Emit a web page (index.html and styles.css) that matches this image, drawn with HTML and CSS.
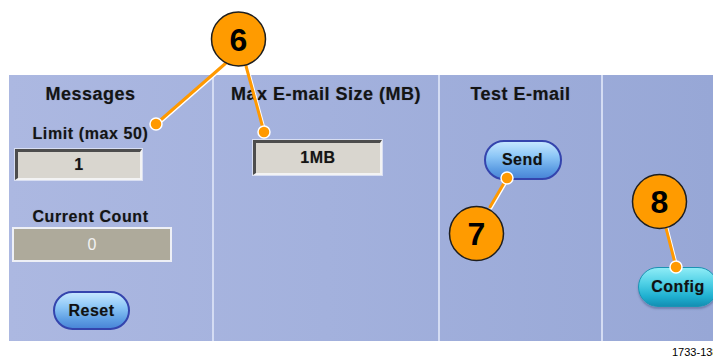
FILE: index.html
```html
<!DOCTYPE html>
<html>
<head>
<meta charset="utf-8">
<link rel="stylesheet" href="styles.css">
</head>
<body>
<div class="page">
  <div class="panel">
    <div class="col col-messages">
      <div class="head">Messages</div>
      <div class="label label-limit">Limit (max 50)</div>
      <div class="field field-limit">1</div>
      <div class="label label-count">Current Count</div>
      <div class="field-disabled">0</div>
      <button class="btn btn-blue btn-reset">Reset</button>
    </div>
    <div class="col col-size">
      <div class="head">Max E-mail Size (MB)</div>
      <div class="field field-size">1MB</div>
    </div>
    <div class="col col-test">
      <div class="head">Test E-mail</div>
      <button class="btn btn-blue btn-send">Send</button>
    </div>
    <div class="col col-config">
      <button class="btn btn-teal">Config</button>
    </div>
  </div>
  <div class="caption">1733-138</div>
</div>
<svg class="callouts" width="713" height="358" viewBox="0 0 713 358">
  <g stroke-linecap="round">
    <line x1="227" y1="64" x2="157" y2="125" stroke="#fff" stroke-width="3"/>
    <line x1="226" y1="63" x2="156" y2="124" stroke="#f90" stroke-width="3"/>
    <line x1="247" y1="66" x2="265" y2="132" stroke="#fff" stroke-width="3"/>
    <line x1="246" y1="66" x2="264" y2="132" stroke="#f90" stroke-width="3"/>
    <line x1="491" y1="208" x2="508" y2="179" stroke="#fff" stroke-width="3"/>
    <line x1="490" y1="207" x2="507" y2="178" stroke="#f90" stroke-width="3"/>
    <line x1="667" y1="228" x2="677" y2="267" stroke="#fff" stroke-width="3"/>
    <line x1="666" y1="228" x2="676" y2="267" stroke="#f90" stroke-width="3"/>
  </g>
  <g fill="#f90" stroke="#fff" stroke-width="1.5">
    <circle cx="156" cy="124" r="6"/>
    <circle cx="264" cy="132" r="6"/>
    <circle cx="507" cy="178" r="6"/>
    <circle cx="676" cy="267" r="6"/>
  </g>
  <g fill="#ff9b00" stroke="#1e1e1e" stroke-width="1.5">
    <circle cx="238.5" cy="39" r="27"/>
    <circle cx="476.5" cy="233.5" r="27"/>
    <circle cx="659.5" cy="201.5" r="27"/>
  </g>
  <g class="num" text-anchor="middle">
    <text x="238.5" y="50.5">6</text>
    <text x="476.5" y="245">7</text>
    <text x="659.5" y="213">8</text>
  </g>
</svg>
</body>
</html>
```

FILE: styles.css
```css
html, body {
  margin: 0;
  padding: 0;
  background: #ffffff;
  overflow: hidden;
}

body {
  width: 713px;
  height: 358px;
  position: relative;
  font-family: "Liberation Sans", Arial, sans-serif;
  color: #141414;
}

.page {
  padding-top: 75px;
  padding-left: 9px;
}

.panel {
  height: 266px;
  display: grid;
  grid-template-columns: 203px 226px 163px 1fr;
  background: linear-gradient(to right, #acb8e1 0%, #a3b1dd 45%, #97a7d6 100%);
}

.col {
  box-sizing: border-box;
  display: flex;
  flex-direction: column;
  align-items: center;
  padding-top: 9px;
  min-width: 0;
}

.col + .col {
  border-left: 2px solid #d4dcf3;
}

.col-messages {
  padding-right: 40px;
}

.head {
  font-size: 18px;
  line-height: 20px;
  font-weight: bold;
  letter-spacing: 0.5px;
  white-space: nowrap;
  text-shadow: 0 0 1px rgba(0, 0, 0, 0.35);
}

.label {
  font-size: 16px;
  line-height: 18px;
  font-weight: bold;
  letter-spacing: 0.6px;
  white-space: nowrap;
  text-shadow: 0 0 1px rgba(0, 0, 0, 0.3);
}

.label-limit {
  margin-top: 21px;
}

.label-count {
  margin-top: 28px;
}

.field {
  box-sizing: border-box;
  border-style: solid;
  border-width: 3px 2px 2px 3px;
  border-color: #4d4d4d #f3f3f3 #f3f3f3 #4d4d4d;
  background: #d9d6cf;
  box-shadow: 0 0 0 1px #d8def2;
  display: flex;
  align-items: center;
  justify-content: center;
  font-size: 16px;
  font-weight: bold;
  letter-spacing: 0.5px;
  text-shadow: 0 0 1px rgba(0, 0, 0, 0.3);
}

.field-limit {
  width: 127px;
  height: 31px;
  margin-top: 6px;
  margin-right: 24px;
}

.field-size {
  width: 129px;
  height: 35px;
  margin-top: 36px;
  margin-right: 17px;
}

.field-disabled {
  box-sizing: border-box;
  width: 160px;
  height: 35px;
  margin-top: 1px;
  margin-left: 3px;
  border: 2px solid #eef0f6;
  background: #aeaa9b;
  color: #f2f2f2;
  display: flex;
  align-items: center;
  justify-content: center;
  font-size: 16px;
}

.btn {
  box-sizing: border-box;
  font-family: "Liberation Sans", Arial, sans-serif;
  font-size: 16px;
  font-weight: bold;
  letter-spacing: 0.5px;
  color: #111;
  padding: 0;
  border-radius: 20px;
  text-shadow: 0 0 1px rgba(0, 0, 0, 0.3);
}

.btn-blue {
  width: 78px;
  height: 40px;
  border: 2px solid #3444ad;
  background: linear-gradient(to bottom, #c4e6ff 0%, #8cc6f6 40%, #5f9fe4 75%, #4a86d8 100%);
}

.btn-reset {
  width: 77px;
  height: 39px;
  margin-top: 29px;
  margin-left: 2px;
}

.btn-send {
  margin-top: 36px;
  margin-left: 4px;
}

.col-config {
  align-items: flex-start;
  padding-top: 192px;
}

.btn-teal {
  width: 80px;
  height: 40px;
  margin-left: 35px;
  flex-shrink: 0;
  border: 1px solid #1b93b3;
  background: linear-gradient(to bottom, #8eecf6 0%, #4fd0e6 40%, #1fb0d0 75%, #138fb4 100%);
  box-shadow: 0 2px 2px rgba(40, 60, 110, 0.35);
}

.caption {
  margin-top: 5px;
  margin-left: 663px;
  font-size: 11px;
  line-height: 13px;
  white-space: nowrap;
  color: #000;
}

.callouts {
  position: absolute;
  left: 0;
  top: 0;
}

.num text {
  font-family: "Liberation Sans", Arial, sans-serif;
  font-size: 32px;
  font-weight: bold;
  fill: #000;
}
```
